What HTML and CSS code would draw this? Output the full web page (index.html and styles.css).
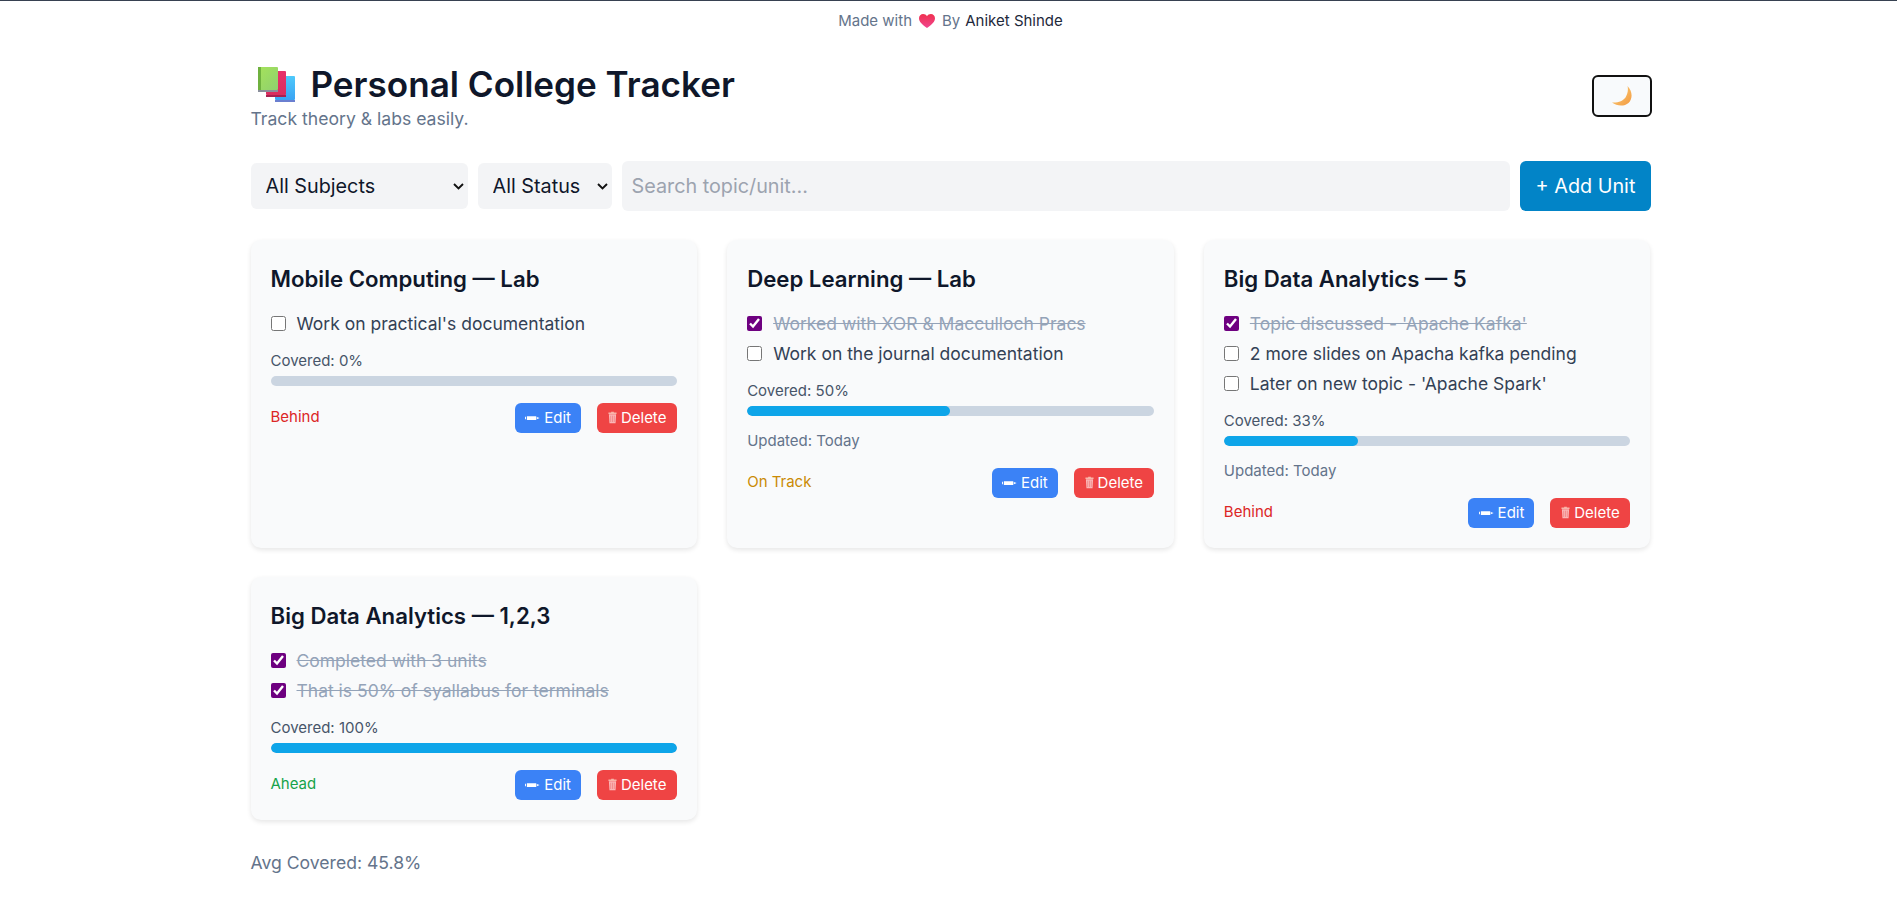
FILE: index.html
```html
<!DOCTYPE html>
<html lang="en">
<head>
<meta charset="utf-8">
<title>Personal College Tracker</title>
<link rel="stylesheet" href="styles.css">
</head>
<body>
<svg class="defs" width="0" height="0" aria-hidden="true">
  <defs>
    <linearGradient id="g-green" x1="0" y1="0" x2="1" y2="1"><stop offset="0" stop-color="#a5e35a"/><stop offset="1" stop-color="#8fd06f"/></linearGradient>
    <linearGradient id="g-red" x1="0" y1="0" x2="0" y2="1"><stop offset="0" stop-color="#e8316b"/><stop offset="1" stop-color="#d92d5e"/></linearGradient>
    <linearGradient id="g-blue" x1="0" y1="0" x2="0" y2="1"><stop offset="0" stop-color="#4fc9fb"/><stop offset="1" stop-color="#3aa3f3"/></linearGradient>
    <linearGradient id="g-heart" x1="0" y1="0" x2="0" y2="1"><stop offset="0" stop-color="#f0304f"/><stop offset="1" stop-color="#f0468f"/></linearGradient>
    <linearGradient id="g-moon" x1="0" y1="0" x2="1" y2="1"><stop offset="0" stop-color="#fbd27a"/><stop offset="1" stop-color="#f39a42"/></linearGradient>
    <symbol id="i-pencil" viewBox="0 0 16 8"><path d="M0 2.6h1v2.8H0zM2 2h10v4H2zM12.6 2.8l3 1.2-3 1.2z" fill="#fff"/></symbol>
    <symbol id="i-trash" viewBox="0 0 10 14"><path d="M3.5 0.5h3v1h3v1.5H.5V1.5h3z" fill="#f8b4a8"/><path d="M1 3.5h8L8.4 13.5H1.6z" fill="#fbb6b6"/><path d="M3 5v7M5 5v7M7 5v7" stroke="#ef7f7f" stroke-width=".8"/></symbol>
  </defs>
</svg>

<p class="credit">Made with
  <svg class="heart" viewBox="0 0 16 14" aria-hidden="true"><path d="M8 14C3 10.4 0 7.6 0 4.2 0 1.7 1.9 0 4.1 0 5.7 0 7.2.9 8 2.3 8.8.9 10.3 0 11.9 0 14.1 0 16 1.7 16 4.2 16 7.6 13 10.4 8 14z" fill="url(#g-heart)"/></svg>
  By <span class="author">Aniket Shinde</span></p>

<main class="wrap">
  <header class="head">
    <div>
      <h1 class="title">
        <svg class="books" viewBox="0 0 38 35" aria-hidden="true">
          <rect x="17" y="9" width="20" height="24" rx="1" fill="url(#g-blue)"/><rect x="17" y="33" width="20" height="2" fill="#6a7fd0"/>
          <rect x="8" y="4" width="20" height="24" rx="1" fill="url(#g-red)"/><rect x="8" y="28" width="20" height="2" fill="#a8204f"/>
          <rect x="0" y="0" width="20" height="23" rx="1" fill="url(#g-green)"/><rect x="0" y="0" width="3" height="23" fill="#6fb13f"/><rect x="0" y="23" width="20" height="2" fill="#8a8f9c"/>
        </svg>
        <span>Personal College Tracker</span>
      </h1>
      <p class="tagline">Track theory &amp; labs easily.</p>
    </div>
    <button class="theme" type="button" aria-label="Toggle theme">
      <svg class="moon" viewBox="0 0 20 20" aria-hidden="true"><path d="M15.5 0C20.5 5 21 12.5 16.5 17 12.5 20.5 5 20.5 0 16.5 6 17 11 15 13.5 11.5 15.5 8 16.5 4 15.5 0z" fill="url(#g-moon)"/></svg>
    </button>
  </header>

  <div class="controls">
    <select class="sel sel-subject"><option>All Subjects</option><option>Mobile Computing</option><option>Deep Learning</option><option>Big Data Analytics</option></select>
    <select class="sel sel-status"><option>All Status</option><option>Behind</option><option>On Track</option><option>Ahead</option></select>
    <input class="search" type="text" placeholder="Search topic/unit...">
    <button class="add" type="button">+ Add Unit</button>
  </div>

  <section class="grid">
    <article class="card">
      <h2 class="card-title">Mobile Computing — Lab</h2>
      <ul class="tasks">
        <li class="task"><input type="checkbox" class="check"><span>Work on practical's documentation</span></li>
      </ul>
      <div class="covered">Covered: 0%</div>
      <div class="track"><div class="fill" style="width:0%"></div></div>
      <div class="foot">
        <span class="state behind">Behind</span>
        <div class="btns">
          <button class="btn edit" type="button"><svg class="ic-pencil"><use href="#i-pencil"/></svg>Edit</button>
          <button class="btn del" type="button"><svg class="ic-trash"><use href="#i-trash"/></svg>Delete</button>
        </div>
      </div>
    </article>

    <article class="card">
      <h2 class="card-title">Deep Learning — Lab</h2>
      <ul class="tasks">
        <li class="task done"><input type="checkbox" class="check" checked><span>Worked with XOR &amp; Macculloch Pracs</span></li>
        <li class="task"><input type="checkbox" class="check"><span>Work on the journal documentation</span></li>
      </ul>
      <div class="covered">Covered: 50%</div>
      <div class="track"><div class="fill" style="width:50%"></div></div>
      <div class="updated">Updated: Today</div>
      <div class="foot">
        <span class="state ontrack">On Track</span>
        <div class="btns">
          <button class="btn edit" type="button"><svg class="ic-pencil"><use href="#i-pencil"/></svg>Edit</button>
          <button class="btn del" type="button"><svg class="ic-trash"><use href="#i-trash"/></svg>Delete</button>
        </div>
      </div>
    </article>

    <article class="card">
      <h2 class="card-title">Big Data Analytics — 5</h2>
      <ul class="tasks">
        <li class="task done"><input type="checkbox" class="check" checked><span>Topic discussed - 'Apache Kafka'</span></li>
        <li class="task"><input type="checkbox" class="check"><span>2 more slides on Apacha kafka pending</span></li>
        <li class="task"><input type="checkbox" class="check"><span>Later on new topic - 'Apache Spark'</span></li>
      </ul>
      <div class="covered">Covered: 33%</div>
      <div class="track"><div class="fill" style="width:33%"></div></div>
      <div class="updated">Updated: Today</div>
      <div class="foot">
        <span class="state behind">Behind</span>
        <div class="btns">
          <button class="btn edit" type="button"><svg class="ic-pencil"><use href="#i-pencil"/></svg>Edit</button>
          <button class="btn del" type="button"><svg class="ic-trash"><use href="#i-trash"/></svg>Delete</button>
        </div>
      </div>
    </article>

    <article class="card">
      <h2 class="card-title">Big Data Analytics — 1,2,3</h2>
      <ul class="tasks">
        <li class="task done"><input type="checkbox" class="check" checked><span>Completed with 3 units</span></li>
        <li class="task done"><input type="checkbox" class="check" checked><span>That is 50% of syallabus for terminals</span></li>
      </ul>
      <div class="covered">Covered: 100%</div>
      <div class="track"><div class="fill" style="width:100%"></div></div>
      <div class="foot">
        <span class="state ahead">Ahead</span>
        <div class="btns">
          <button class="btn edit" type="button"><svg class="ic-pencil"><use href="#i-pencil"/></svg>Edit</button>
          <button class="btn del" type="button"><svg class="ic-trash"><use href="#i-trash"/></svg>Delete</button>
        </div>
      </div>
    </article>
  </section>

  <p class="avg">Avg Covered: 45.8%</p>
</main>
</body>
</html>
```

FILE: styles.css
```css
* { box-sizing: border-box; }
html, body { margin: 0; padding: 0; }
body {
  background: #fff;
  border-top: 1px solid #374151;
  padding-left: 4px;
  font-family: Inter, "Liberation Sans", sans-serif;
  color: #0f172a;
}
.defs { position: absolute; }
.credit {
  margin: 0;
  height: 39px;
  display: flex;
  align-items: center;
  justify-content: center;
  gap: 5px;
  font-size: 15px;
  color: #64748b;
}
.heart { width: 16px; height: 14px; margin: 0 2px; }
.author { color: #1e293b; }
.wrap { width: 1400px; margin: 21px auto 0; }
.head {
  display: flex;
  justify-content: space-between;
  align-items: center;
  margin-bottom: 30px;
}
.title {
  margin: 0;
  display: flex;
  align-items: center;
  gap: 15px;
  padding-left: 7px;
  font-size: 35.1px;
  line-height: 46px;
  font-weight: 600;
  color: #0f172a;
}
.books { width: 38px; height: 35px; }
.tagline { margin: 0; font-size: 17.6px; line-height: 24px; color: #64748b; }
.theme {
  width: 60px;
  height: 42px;
  margin-right: -1px;
  padding: 0;
  display: flex;
  align-items: center;
  justify-content: center;
  background: #f8fafc;
  border: 2px solid #111;
  border-radius: 6px;
}
.moon { width: 20px; height: 20px; }
.controls { display: flex; align-items: center; gap: 10px; margin-bottom: 29px; }
.sel {
  appearance: none;
  height: 46px;
  padding: 0 24px 0 15px;
  border: none;
  border-radius: 6px;
  background: #f3f4f6 url("data:image/svg+xml,%3Csvg xmlns='http://www.w3.org/2000/svg' width='11' height='7' viewBox='0 0 11 7'%3E%3Cpath d='M1 1l4.5 4.5L10 1' fill='none' stroke='%23111' stroke-width='1.9'/%3E%3C/svg%3E") no-repeat right 4px center;
  font: 19.8px Inter, sans-serif;
  color: #0f172a;
}
.sel-subject { width: 217px; }
.sel-status { width: 134px; }
.search {
  flex: 1;
  height: 50px;
  padding: 0 10px;
  border: none;
  border-radius: 6px;
  background: #f3f4f6;
  font: 19.8px Inter, sans-serif;
}
.search::placeholder { color: #9ca3af; opacity: 1; }
.add {
  width: 131px;
  height: 50px;
  padding: 0 0 0 1px;
  border: none;
  border-radius: 6px;
  background: #0284c7;
  color: #fff;
  font: 19.8px Inter, sans-serif;
}
.grid { display: grid; grid-template-columns: repeat(3, 1fr); gap: 29px 30px; }
.card {
  padding: 20px;
  background: #f9fafb;
  border-radius: 10px;
  box-shadow: 0 2px 5px rgba(0, 0, 0, .1);
}
.card-title { margin: 0 0 10px; font-size: 22.2px; line-height: 38px; font-weight: 600; color: #0f172a; }
.tasks { list-style: none; margin: 0 0 13px; padding: 0; }
.task { display: flex; align-items: center; gap: 11px; height: 30px; font-size: 17.5px; color: #334155; }
.check { width: 15px; height: 15px; margin: 0; accent-color: #6e0080; }
.done span { color: #94a3b8; text-decoration: line-through; }
.covered { font-size: 15px; line-height: 20px; color: #475569; margin-bottom: 5px; }
.track { height: 10px; border-radius: 6px; background: #cbd5e1; overflow: hidden; }
.fill { height: 100%; border-radius: 6px; background: #0ea5e9; }
.updated { font-size: 15px; line-height: 20px; color: #64748b; margin-top: 15px; }
.foot { display: flex; justify-content: space-between; align-items: center; margin-top: 17px; }
.state { font-size: 15px; margin-bottom: 3px; }
.behind { color: #dc2626; }
.ontrack { color: #ca8a04; }
.ahead { color: #16a34a; }
.btns { display: flex; gap: 16px; }
.btn {
  height: 30px;
  padding: 0 0 1px;
  display: flex;
  align-items: center;
  justify-content: center;
  gap: 4px;
  border: none;
  border-radius: 6px;
  color: #fff;
  font: 15px Inter, sans-serif;
}
.edit { width: 66px; background: #3b82f6; }
.del { width: 80px; background: #ef4444; }
.ic-pencil { width: 15px; height: 8px; }
.ic-trash { width: 9px; height: 13px; }
.avg { margin: 31px 0 0; font-size: 17.6px; line-height: 24px; color: #64748b; }
```
